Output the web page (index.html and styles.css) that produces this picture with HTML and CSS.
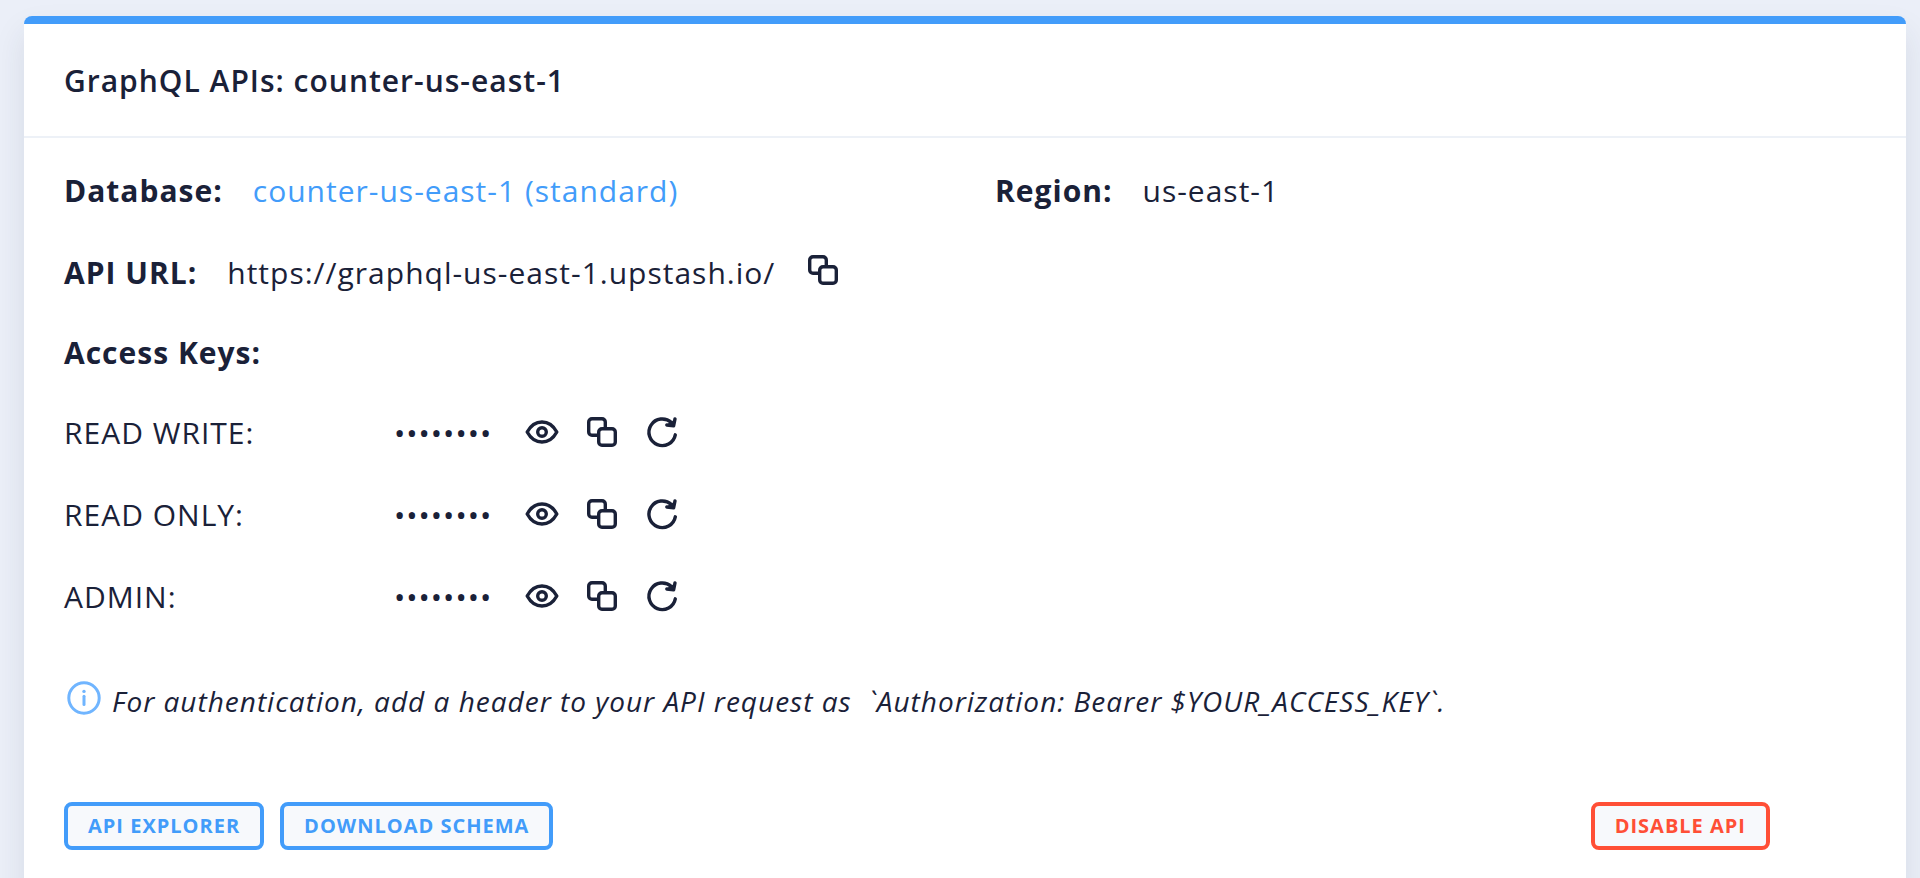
FILE: index.html
```html
<!DOCTYPE html>
<html lang="en">
<head>
<meta charset="utf-8">
<title>GraphQL APIs: counter-us-east-1</title>
<link rel="stylesheet" href="styles.css">
</head>
<body>
<svg class="sprite" aria-hidden="true">
  <symbol id="copy" viewBox="0 0 36 36">
    <path d="M13 21.3H8A3.3 3.3 0 0 1 4.7 18V8A3.3 3.3 0 0 1 8 4.7H18A3.3 3.3 0 0 1 21.3 8V13"/>
    <rect x="14.7" y="14.7" width="16.6" height="16.6" rx="3.3"/>
  </symbol>
  <symbol id="eye" viewBox="0 0 36 36">
    <path d="M3.2 18C7 11 12 8 18 8S29 11 32.8 18C29 25 24 28 18 28S7 25 3.2 18Z"/>
    <circle cx="18" cy="18" r="4.3"/>
  </symbol>
  <symbol id="refresh" viewBox="0 0 36 36">
    <path d="M31.3 20.8A13.3 13.3 0 1 1 27.4 8.6L28.6 10"/>
    <path d="M31 4.9L29.6 11.8L22.8 11"/>
    <path d="M23.5 10.8L27 7.6L30.6 7L29.4 12Z" class="solid"/>
  </symbol>
</svg>
<main class="card">
  <header class="card-header"><h1 class="title">GraphQL APIs: counter-us-east-1</h1></header>
  <div class="card-body">
    <div class="details">
      <div class="field"><strong>Database:</strong><a class="link" href="#database">counter-us-east-1 (standard)</a></div>
      <div class="field"><strong>Region:</strong><span>us-east-1</span></div>
    </div>
    <div class="row field"><strong>API URL:</strong><span>https://graphql-us-east-1.upstash.io/</span>
      <button class="icon-button" aria-label="Copy API URL"><svg class="icon"><use href="#copy"/></svg></button>
    </div>
    <h2 class="row subtitle">Access Keys:</h2>
    <div class="row key">
      <span class="key-name">READ WRITE:</span><span class="secret">••••••••</span>
      <div class="icons">
        <button class="icon-button" aria-label="Show read write key"><svg class="icon"><use href="#eye"/></svg></button>
        <button class="icon-button" aria-label="Copy read write key"><svg class="icon"><use href="#copy"/></svg></button>
        <button class="icon-button" aria-label="Reset read write key"><svg class="icon"><use href="#refresh"/></svg></button>
      </div>
    </div>
    <div class="row key">
      <span class="key-name">READ ONLY:</span><span class="secret">••••••••</span>
      <div class="icons">
        <button class="icon-button" aria-label="Show read only key"><svg class="icon"><use href="#eye"/></svg></button>
        <button class="icon-button" aria-label="Copy read only key"><svg class="icon"><use href="#copy"/></svg></button>
        <button class="icon-button" aria-label="Reset read only key"><svg class="icon"><use href="#refresh"/></svg></button>
      </div>
    </div>
    <div class="row key">
      <span class="key-name">ADMIN:</span><span class="secret">••••••••</span>
      <div class="icons">
        <button class="icon-button" aria-label="Show admin key"><svg class="icon"><use href="#eye"/></svg></button>
        <button class="icon-button" aria-label="Copy admin key"><svg class="icon"><use href="#copy"/></svg></button>
        <button class="icon-button" aria-label="Reset admin key"><svg class="icon"><use href="#refresh"/></svg></button>
      </div>
    </div>
    <div class="note">
      <svg class="info" viewBox="0 0 36 36" aria-hidden="true"><circle cx="18" cy="18" r="15.2"/><path d="M18 16.2V24.6"/><circle cx="18" cy="11.4" r="1.7" class="dot"/></svg>
      <em>For authentication, add a header to your API request as &nbsp;`Authorization: Bearer $YOUR_ACCESS_KEY`.</em>
    </div>
    <div class="actions">
      <button class="button">API EXPLORER</button>
      <button class="button">DOWNLOAD SCHEMA</button>
      <button class="button danger">DISABLE API</button>
    </div>
  </div>
</main>
</body>
</html>
```
FILE: styles.css
```css
* { box-sizing: border-box; }
body {
  margin: 0;
  padding: 16px 14px 0 24px;
  background: #ebeff8;
  color: #1a2138;
  font: 30px/42px "Open Sans", sans-serif;
  letter-spacing: 1px;
  overflow: hidden;
}
.sprite { position: absolute; width: 0; height: 0; }
.card {
  min-height: 100vh;
  border-top: 8px solid #429cfa;
  border-radius: 8px;
  background: #fff;
  box-shadow: 0 16px 32px rgba(44, 51, 73, 0.1);
}
.card-header {
  padding: 36px 40px 34px;
  border-bottom: 2px solid #edf1f7;
}
.title { margin: 0; font-size: 30px; font-weight: 600; }
.card-body { padding: 32px 40px; }
.details { display: grid; grid-template-columns: 931px 1fr; }
.field { display: flex; align-items: center; gap: 30px; }
.row { margin: 40px 0 0; }
.subtitle { font-size: 30px; font-weight: 700; }
.subtitle, .subtitle + .key { margin-top: 38px; }
.link { color: #429cfa; text-decoration: none; }
.key { display: flex; align-items: center; }
.key-name { width: 330px; }
.secret { width: 130px; }
.icons { display: flex; gap: 24px; }
.icon-button {
  display: block;
  padding: 0 0 6px;
  border: 0;
  background: none;
  color: inherit;
}
.key .icon-button { padding-bottom: 2px; }
.icon {
  display: block;
  width: 36px;
  height: 36px;
  fill: none;
  stroke: currentColor;
  stroke-width: 3.4px;
  stroke-linecap: round;
  stroke-linejoin: round;
}
.solid { fill: currentColor; stroke-width: 1px; }
.note {
  display: flex;
  align-items: center;
  gap: 10px;
  margin-top: 62px;
  padding-left: 2px;
  font-size: 28px;
}
.info {
  width: 36px;
  height: 42px;
  padding-bottom: 6px;
  fill: none;
  stroke: #70b5ff;
  stroke-width: 3px;
  stroke-linecap: round;
}
.dot { fill: #70b5ff; stroke: none; }
.actions { display: flex; gap: 16px; margin-top: 80px; padding-right: 96px; }
.button {
  height: 48px;
  padding: 0 20px;
  border: 4px solid #429cfa;
  border-radius: 8px;
  background: #f7f9fc;
  color: #429cfa;
  font: 700 20px/24px "Open Sans", sans-serif;
  letter-spacing: 1px;
}
.danger { margin-left: auto; border-color: #ff4f36; color: #ff4f36; }
```
